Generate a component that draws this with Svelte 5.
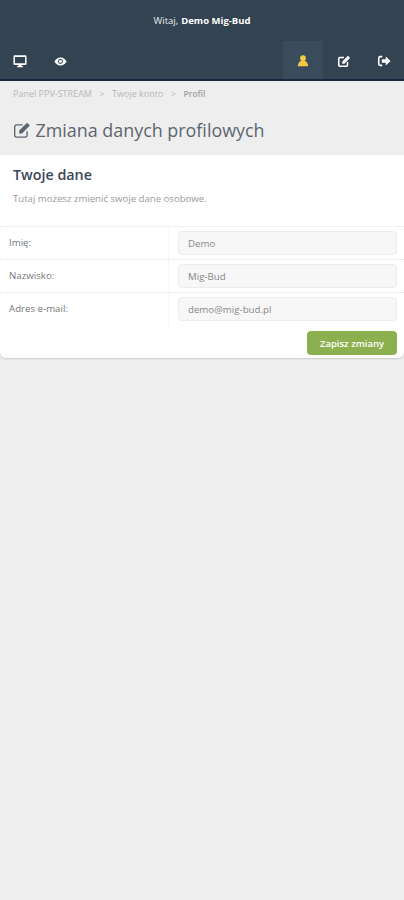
<script>
  const rows = [
    { label: 'Imię:', value: 'Demo' },
    { label: 'Nazwisko:', value: 'Mig-Bud' },
    { label: 'Adres e-mail:', value: 'demo@mig-bud.pl' }
  ];
</script>

<div class="page">
  <header>
    <div class="welcome">Witaj, <b>Demo Mig-Bud</b></div>
    <nav>
      <div class="group">
        <span class="item"><svg viewBox="0 0 16 16" width="14" height="14"><path fill="#fff" d="M2 1.500h12a1.500 1.500 0 0 1 1.500 1.500v8A1.500 1.500 0 0 1 14 12.500h-4V14h1.500v1h-7v-1H6v-1.500H2A1.500 1.500 0 0 1 .5 11V3A1.500 1.500 0 0 1 2 1.500zm.2 2v7h11.600v-7z"/></svg></span>
        <span class="item"><svg viewBox="0 0 16 16" width="13" height="13"><path fill="#fff" d="M8 3c3.500 0 6.200 2.300 7.500 5-1.300 2.700-4 5-7.500 5S1.800 10.700.5 8C1.800 5.300 4.500 3 8 3zm0 2a3 3 0 1 0 0 6 3 3 0 0 0 0-6z"/><circle cx="8" cy="8" r="1.800" fill="#fff"/></svg></span>
      </div>
      <div class="group">
        <span class="item active"><svg viewBox="0 0 16 16" width="14" height="14"><path fill="#f5c842" d="M8 1.500a3.300 3.300 0 0 1 3.300 3.300c0 1.300-.6 2.300-1.400 3 2.200.7 3.600 2.300 4.100 6.200H2c.5-3.900 1.900-5.500 4.100-6.200-.8-.7-1.400-1.700-1.400-3A3.300 3.300 0 0 1 8 1.500z"/></svg></span>
        <span class="item"><svg viewBox="0 0 16 16" width="14" height="14"><path fill="none" stroke="#fff" stroke-width="1.800" d="M12 9v3.500a1.500 1.500 0 0 1-1.500 1.500h-7A1.500 1.500 0 0 1 2 12.500v-7A1.500 1.500 0 0 1 3.500 4H8"/><path fill="#fff" d="M6 8.500 12.500 2 15 4.500 8.500 11H6z"/></svg></span>
        <span class="item"><svg viewBox="0 0 16 16" width="14" height="14"><path fill="none" stroke="#fff" stroke-width="1.800" d="M6 3H3.500A1.500 1.500 0 0 0 2 4.500v7A1.500 1.500 0 0 0 3.500 13H6"/><path fill="#fff" d="M5.500 6H10V2.800L15.500 8 10 13.200V10H5.500z"/></svg></span>
      </div>
    </nav>
  </header>

  <div class="crumbs">
    <span>Panel PPV-STREAM</span><i>&gt;</i><span>Twoje konto</span><i>&gt;</i><b>Profil</b>
  </div>

  <h1>
    <svg viewBox="0 0 16 16" width="18" height="18"><path fill="none" stroke="#5c6670" stroke-width="1.200" d="M12.500 9v3.800a1.500 1.500 0 0 1-1.500 1.500H3a1.500 1.500 0 0 1-1.500-1.500V5A1.500 1.500 0 0 1 3 3.500h5.500"/><path fill="#5c6670" d="M5.500 8.500 12.500 1.500 15 4 8 11H5.500z"/></svg>
    <span>Zmiana danych profilowych</span>
  </h1>

  <section class="card">
    <div class="intro">
      <h2>Twoje dane</h2>
      <p>Tutaj możesz zmienić swoje dane osobowe.</p>
    </div>
    {#each rows as row}
      <div class="row">
        <label for={row.label}>{row.label}</label>
        <div class="field"><input id={row.label} value={row.value} readonly /></div>
      </div>
    {/each}
    <div class="actions"><button type="button">Zapisz zmiany</button></div>
  </section>
</div>

<style>
  :global(body) { margin: 0; background: #eeeeee; }
  .page { min-height: 900px; background: #eeeeee; font-family: "Open Sans", sans-serif; }
  header { height: 79px; background: #344352; border-bottom: 2px solid #1b2440; box-sizing: content-box; color: #fff; }
  .welcome { height: 41px; display: flex; align-items: center; justify-content: center; font-size: 9.5px; color: #e8ecef; }
  .welcome b { margin-left: 3px; color: #fff; }
  nav { height: 38px; display: flex; justify-content: space-between; }
  .group { display: flex; }
  .item { width: 40.34px; height: 38px; padding-top: 2px; box-sizing: border-box; display: flex; align-items: center; justify-content: center; }
  .active { background: #3a4b5b; }
  .crumbs { height: 24px; padding: 0 13px; display: flex; align-items: center; font-size: 9px; color: #b8b8b8; }
  .crumbs i { font-style: normal; margin: 0 7.5px; }
  .crumbs b { color: #a0a0a0; font-size: 8.5px; font-weight: 600; }
  h1 { margin: 0; height: 50px; padding: 0 13px; display: flex; align-items: center; gap: 4.5px; font-size: 17.9px; font-weight: 400; color: #5c6670; }
  .card { background: #fff; border-radius: 0 0 6px 6px; box-shadow: 0 1px 2px rgba(0, 0, 0, .15); padding-bottom: 3px; }
  .intro { height: 71px; padding: 10px 13px 0; box-sizing: border-box; }
  h2 { margin: 0; font-size: 14.3px; font-weight: 600; color: #3c4658; line-height: 20px; }
  p { margin: 7px 0 0; font-size: 9.6px; color: #9a9a9a; line-height: 14px; }
  .row { height: 33px; box-sizing: border-box; display: grid; grid-template-columns: 168px 1fr; border-top: 1px dotted #e2e2e2; }
  .row:last-of-type { border-bottom: 1px dotted #e2e2e2; height: 34px; }
  label { padding: 9px 0 0 9px; font-size: 9.7px; color: #777; line-height: 14px; }
  .field { border-left: 1px dotted #f0f0f0; padding: 4px 7px 0 9px; }
  input { width: 100%; height: 24px; box-sizing: border-box; border: 1px solid #ececec; border-radius: 4px; background: #f7f7f7; padding: 0 9px; font: 9.7px "Open Sans", sans-serif; color: #888; outline: none; display: block; }
  .actions { display: flex; justify-content: flex-end; padding: 6px 7px 0 0; }
  button { width: 90px; height: 24px; border: none; border-radius: 4px; background: #8cb04f; color: #fff; font: 600 9.5px "Open Sans", sans-serif; }
</style>
